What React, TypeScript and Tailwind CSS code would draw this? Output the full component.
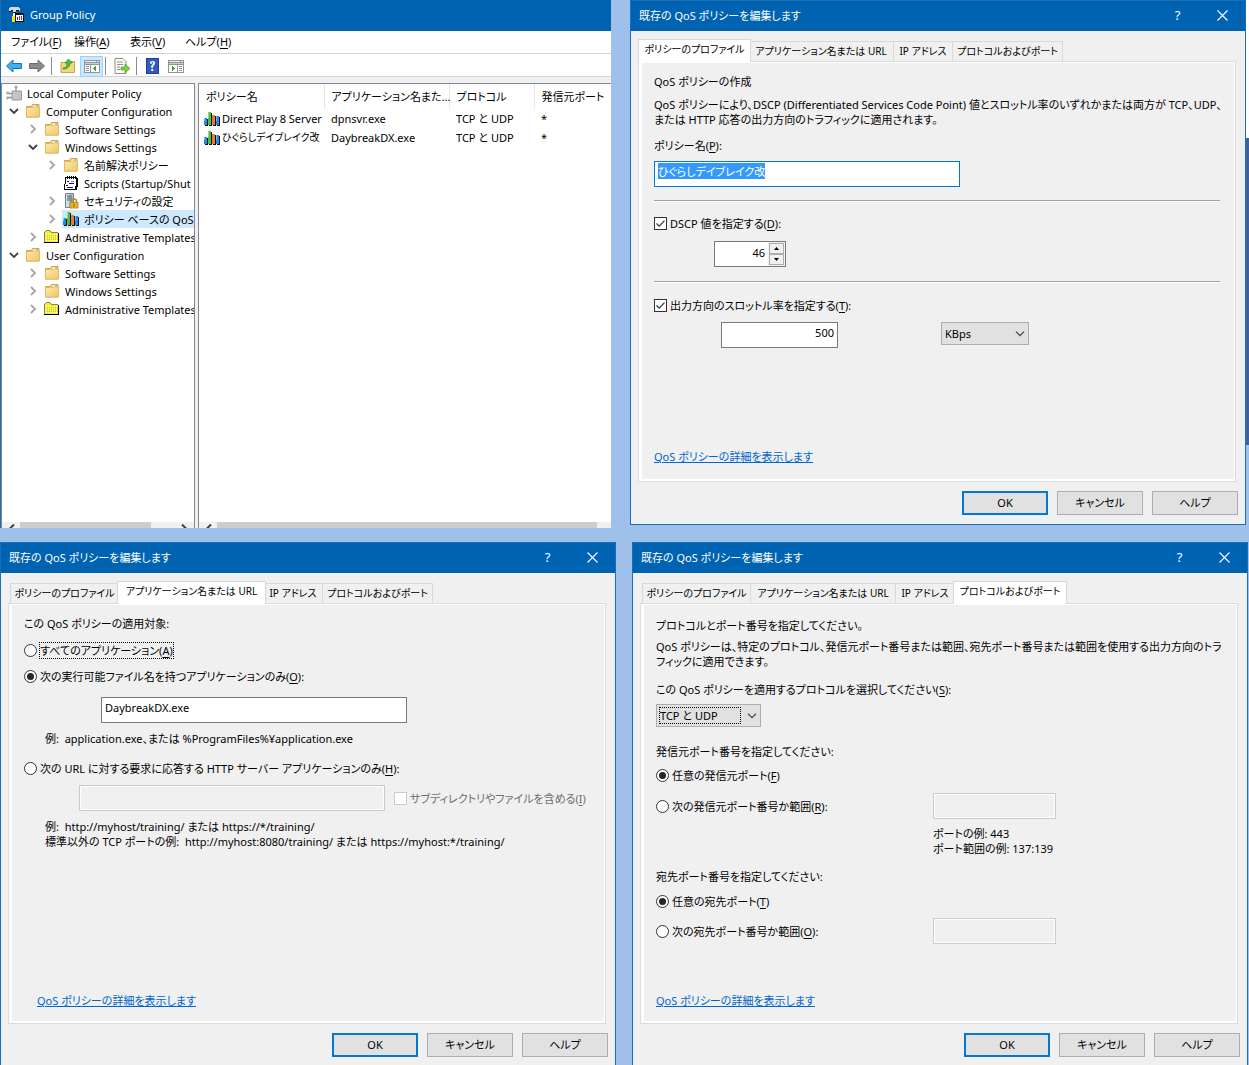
import React, { useEffect, useRef } from 'react';

type IconName = 'folder' | 'template' | 'script' | 'security' | 'qos' | 'root';

interface TreeNode {
  label: string;
  level: 0 | 1 | 2 | 3;
  icon: IconName;
  state?: 'open' | 'closed';
  selected?: boolean;
}

interface PolicyRow {
  name: string;
  nameSize: string;
  app: string;
  protocol: string;
  port: string;
}

const treeNodes: TreeNode[] = [
  { label: 'Local Computer Policy', level: 0, icon: 'root' },
  { label: 'Computer Configuration', level: 1, icon: 'folder', state: 'open' },
  { label: 'Software Settings', level: 2, icon: 'folder', state: 'closed' },
  { label: 'Windows Settings', level: 2, icon: 'folder', state: 'open' },
  { label: '名前解決ポリシー', level: 3, icon: 'folder', state: 'closed' },
  { label: 'Scripts (Startup/Shut', level: 3, icon: 'script' },
  { label: 'セキュリティの設定', level: 3, icon: 'security', state: 'closed' },
  { label: 'ポリシー ベースの QoS', level: 3, icon: 'qos', state: 'closed', selected: true },
  { label: 'Administrative Templates', level: 2, icon: 'template', state: 'closed' },
  { label: 'User Configuration', level: 1, icon: 'folder', state: 'open' },
  { label: 'Software Settings', level: 2, icon: 'folder', state: 'closed' },
  { label: 'Windows Settings', level: 2, icon: 'folder', state: 'closed' },
  { label: 'Administrative Templates', level: 2, icon: 'template', state: 'closed' },
];

const policies: PolicyRow[] = [
  { name: 'Direct Play 8 Server', nameSize: 'text-[11px]', app: 'dpnsvr.exe', protocol: 'TCP と UDP', port: '*' },
  { name: 'ひぐらしデイブレイク改', nameSize: 'text-[10px]', app: 'DaybreakDX.exe', protocol: 'TCP と UDP', port: '*' },
];

const tabs = [
  { label: 'ポリシーのプロファイル', width: 'w-[109px]', activeWidth: 'w-[113px]' },
  { label: 'アプリケーション名または URL', width: 'w-[145px]', activeWidth: 'w-[149px]' },
  { label: 'IP アドレス', width: 'w-[59px]', activeWidth: 'w-[63px]' },
  { label: 'プロトコルおよびポート', width: 'w-[110px]', activeWidth: 'w-[114px]' },
];

const indent = ['pl-[3px]', 'pl-1', 'pl-[23px]', 'pl-[42px]'];

/* Icons */

const FolderIcon = () => (
  <svg width="16" height="16" viewBox="0 0 16 16">
    <defs>
      <linearGradient id="folder-fill" x1="0" y1="0" x2="1" y2="1">
        <stop offset="0" stopColor="#fde9ab" />
        <stop offset="1" stopColor="#efc766" />
      </linearGradient>
    </defs>
    <path d="M1.5 3.5h5l1-2h6.5v12.500h-12.500z" fill="#f2d27c" stroke="#d0a348" />
    <path d="M8.500 2.500h4.500v1.500h-4.500z" fill="#fff" />
    <path d="M11 2.500h2v1h-2z" fill="#4aa0e0" />
    <path d="M1.500 4.500h6.500l1-0.500h5.500v10h-13z" fill="url(#folder-fill)" stroke="#dfb65c" strokeWidth="0.800" />
  </svg>
);

const TemplateIcon = () => (
  <svg width="16" height="16" viewBox="0 0 16 16" shapeRendering="crispEdges">
    <path d="M1 2h1V1h5v1h1v1h6v10H1z" fill="#f6f02a" />
    <path d="M2 5h11M2 7h11M2 9h11M2 11h11" stroke="#fffbc0" strokeDasharray="1 1" />
    <path d="M3 6h11M3 8h11M3 10h11" stroke="#d6cd00" strokeDasharray="1 1" />
    <path d="M0 3h1v10H0zM1 2h1v1H1zM2 1h4v1H2zM6 2h1v1H6zM7 3h7v1H7z" fill="#808080" />
    <path d="M0 13h15v1H0zM14 4h1v10h-1z" fill="#000" />
  </svg>
);

const ScriptIcon = () => (
  <svg width="16" height="16" viewBox="0 0 16 16" shapeRendering="crispEdges">
    <path d="M2 2h12v9h-1v4H1v-5h1z" fill="#fff" />
    <path d="M2 2h1v7H2zM1 9h1v6H1zM1 14h12v1H1zM13 2h1v9h-1zM12 11h1v4h-1zM2 2h12v1H2z" fill="#000" />
    <path d="M14 3h1v9h-1zM13 11h1v4h-1z" fill="#000" />
    <path d="M4 1h1v3H4zM6 1h1v3H6zM8 1h1v3H8zM10 1h1v3h-1zM12 1h1v3h-1z" fill="#000" />
    <path d="M4 6h2v1H4zM6 8h5v1H6zM3 10h2v1H3zM4 12h6v1H4z" fill="#0000d8" />
    <path d="M8 6h3v1H8z" fill="#808080" />
  </svg>
);

const SecurityIcon = () => (
  <svg width="16" height="16" viewBox="0 0 16 16">
    <path d="M2.500 0.500h8v14h-8z" fill="#aebfce" stroke="#6f8292" />
    <path d="M3 1h3v13H3z" fill="#d4dfe8" />
    <path d="M4 3h5M4 5h5M4 7h5" stroke="#4a5c6c" />
    <path d="M8.500 10V8.500a2.500 2.500 0 0 1 5 0V10" fill="none" stroke="#b38a1e" strokeWidth="1.500" />
    <path d="M7 9.500h8V15H7z" fill="#e8b730" stroke="#a87c12" strokeWidth="0.800" />
    <path d="M11 11v2.500" stroke="#6b4c05" />
  </svg>
);

const QosIcon = () => (
  <svg className="shrink-0" width="16" height="16" viewBox="0 0 16 16" shapeRendering="crispEdges">
    <path d="M1 8h3v7H1z" fill="#101010" />
    <path d="M0 7h3v7H0z" fill="#1b8fe0" />
    <path d="M5 2h3v13H5z" fill="#101010" />
    <path d="M4 1h3v13H4z" fill="#4fbf3c" />
    <path d="M9 5h3v10H9z" fill="#101010" />
    <path d="M8 4h3v10H8z" fill="#f0734a" />
    <path d="M13 6h3v9h-3z" fill="#101010" />
    <path d="M12 5h3v9h-3z" fill="#1b8fe0" />
    <path d="M12 5h1v5h-1zM0 7h1v3H0z" fill="#6cc4f5" />
    <path d="M4 1h1v6H4z" fill="#93e07f" />
  </svg>
);

const RootIcon = () => (
  <svg width="16" height="16" viewBox="0 0 16 16">
    <path d="M10 6V2M6 8.500H1.500M6 12.500H1.500" stroke="#8c8c8c" strokeWidth="1.300" />
    <circle cx="10" cy="2" r="1.600" fill="#a9a9a9" />
    <circle cx="1.500" cy="8" r="1.400" fill="#a9a9a9" />
    <circle cx="1.500" cy="13" r="1.400" fill="#a9a9a9" />
    <path d="M6 6h9.500v9H6z" fill="#c4c4c8" stroke="#9b9b9f" />
  </svg>
);

const icons: Record<IconName, React.FC> = {
  folder: FolderIcon,
  template: TemplateIcon,
  script: ScriptIcon,
  security: SecurityIcon,
  qos: QosIcon,
  root: RootIcon,
};

const ConsoleIcon = () => (
  <svg width="16" height="16" viewBox="0 0 16 16" shapeRendering="crispEdges">
    <path d="M1 0h9v1h1v3h-1V3H7v2H4V3H2v1H0V1h1z" fill="#d8d8d8" />
    <path d="M0 4h2v1H0zM2 3h2v1H2zM7 3h3v1H7zM4 5h3v1H4z" fill="#101010" />
    <path d="M4 6h2v3H4z" fill="#f5f5f5" />
    <path d="M6 6h1v3H6z" fill="#101010" />
    <path d="M3 9h3v6H3z" fill="#ffe100" />
    <path d="M6 6h9v9H6z" fill="#101010" />
    <path d="M7 8h7v6H7z" fill="#fff" />
    <path d="M8 10h1v3H8z" fill="#2030c0" />
    <path d="M10 9h1v4h-1z" fill="#c01890" />
    <path d="M12 9h1v4h-1z" fill="#c02020" />
  </svg>
);

const ArrowIcon = ({ back }: { back?: boolean }) => (
  <svg width="18" height="16" viewBox="0 0 18 16">
    {back ? (
      <path d="M1.500 8L8 2v3.500h8.500v5H8V14z" fill="#3fb0ee" stroke="#1d72ae" strokeLinejoin="round" />
    ) : (
      <path d="M16.500 8L10 2v3.500H1.500v5H10V14z" fill="#8b8b8b" stroke="#6c6c6c" strokeLinejoin="round" />
    )}
  </svg>
);

const UpFolderIcon = () => (
  <svg width="16" height="16" viewBox="0 0 16 16">
    <path d="M1 4.500h5l1-1h7.500v11H1z" fill="#f3d682" stroke="#cfa347" />
    <path d="M10.500 3.500h3v1h-3z" fill="#4aa0e0" />
    <path d="M3 10c3 0 4-2 4-5H5l3.500-4L12 5h-2c0 4-3 6-7 6z" fill="#4cc335" stroke="#2b8c1c" strokeWidth="0.700" />
  </svg>
);

const PaneIcon = ({ flip }: { flip?: boolean }) => (
  <svg width="16" height="13" viewBox="0 0 16 13" shapeRendering="crispEdges">
    <path d="M0 0h16v13H0z" fill="#8d959d" />
    <path d="M1 1h11v1H1zM13 1h2v1h-2z" fill="#eef1f4" />
    <path d="M1 3h14v1H1z" fill="#c9ced3" />
    {flip ? (
      <>
        <path d="M1 5h8v7H1zM10 5h5v7h-5z" fill="#fff" />
        <path d="M11 6h3v1h-3zM11 8h3v1h-3zM11 10h3v1h-3z" fill="#8d959d" />
        <path d="M4 6h1v5H4zM5 7h1v3H5zM6 8h1v1H6z" fill="#3da42c" />
      </>
    ) : (
      <>
        <path d="M1 5h5v7H1zM7 5h8v7H7z" fill="#fff" />
        <path d="M2 6h3v1H2zM2 8h3v1H2zM2 10h3v1H2z" fill="#8d959d" />
        <path d="M11 6h1v5h-1zM10 7h1v3h-1zM9 8h1v1H9z" fill="#3da42c" />
      </>
    )}
  </svg>
);

const ExportIcon = () => (
  <svg width="16" height="16" viewBox="0 0 16 16">
    <path d="M1 0.500h8l3 3v12H1z" fill="#fffdf2" stroke="#8f8f8f" />
    <path d="M3 4h6M3 6.500h6M3 9h3M3 11.500h3" stroke="#8f8f8f" />
    <path d="M7 9h4V6l5 4.500-5 4.500v-3H7z" fill="#7ed04a" stroke="#4a9c25" strokeWidth="0.700" />
  </svg>
);

const Chevron = ({ className }: { className?: string }) => (
  <svg className={className} width="10" height="6" viewBox="0 0 10 6">
    <path d="M1 0.700l4 4 4-4" fill="none" stroke="#404040" strokeWidth="1.200" />
  </svg>
);

const ScrollArrow = ({ right }: { right?: boolean }) => (
  <svg className="mt-0.5 shrink-0" width="10" height="8" viewBox="0 0 10 8">
    <path d={right ? 'M3 0.500l3.500 3.500L3 7.500' : 'M7 0.500L3.500 4L7 7.500'} fill="none" stroke="#404040" strokeWidth="2" />
  </svg>
);

const Expander = ({ state }: { state: 'open' | 'closed' }) => (
  <svg width="10" height="10" viewBox="0 0 10 10">
    {state === 'open' ? (
      <path d="M1 3l4 4 4-4" fill="none" stroke="#404040" strokeWidth="1.800" />
    ) : (
      <path d="M3 1l4 4-4 4" fill="none" stroke="#a6a6a6" strokeWidth="1.800" />
    )}
  </svg>
);

/* Shared controls */

const Key = ({ k }: { k: string }) => (
  <>
    (<span className="underline underline-offset-2">{k}</span>)
  </>
);

const inputClass =
  'h-[26px] min-w-0 border border-[#7a7a7a] bg-white px-[3px] pb-1.5 text-[11px] leading-[15px] outline-none';
const disabledClass = 'h-[26px] min-w-0 border border-[#cccccc] bg-[#f0f0f0] shadow-[inset_0_0_0_1px_#fff]';

interface ChoiceProps {
  type: 'radio' | 'checkbox';
  id: string;
  name?: string;
  checked?: boolean;
  disabled?: boolean;
  focused?: boolean;
  children: React.ReactNode;
}

const Choice: React.FC<ChoiceProps> = ({ type, id, name, checked, disabled, focused, children }) => (
  <div className="flex h-[15px] items-center gap-[3px] whitespace-nowrap">
    <span className="relative flex size-[13px] shrink-0 items-center justify-center">
      <input
        id={id}
        type={type}
        name={name}
        defaultChecked={checked}
        disabled={disabled}
        className={`peer size-[13px] appearance-none border bg-white ${type === 'radio' ? 'rounded-full' : ''} ${
          disabled ? 'border-[#cccccc]' : 'border-[#333333]'
        }`}
      />
      {type === 'radio' ? (
        <span className="pointer-events-none absolute hidden size-[7px] rounded-full bg-[#262626] peer-checked:block" />
      ) : (
        <svg
          className="pointer-events-none absolute hidden peer-checked:block"
          width="11"
          height="11"
          viewBox="0 0 11 11"
        >
          <path d="M1.500 5.500l2.700 2.700 5.300-5.600" fill="none" stroke="#333" strokeWidth="1.200" />
        </svg>
      )}
    </span>
    <label
      htmlFor={id}
      className={`${disabled ? 'text-[#6d6d6d]' : ''} ${focused ? 'outline-1 outline-dotted outline-black' : ''}`}
    >
      {children}
    </label>
  </div>
);

const TitleButton = ({ label, children }: { label: string; children: React.ReactNode }) => (
  <button aria-label={label} className="flex h-full w-[45px] items-center justify-center text-[13px]">
    {children}
  </button>
);

const DialogButton = ({ primary, children }: { primary?: boolean; children: React.ReactNode }) => (
  <button
    className={`h-6 w-[86px] bg-[#e1e1e1] pb-0.5 ${primary ? 'border-2 border-[#0078d7]' : 'border border-[#adadad]'}`}
  >
    {children}
  </button>
);

const Divider = () => <hr className="mr-[14px] h-0.5 border-0 border-t border-[#a0a0a0] bg-white" />;

interface DialogProps {
  active: number;
  className: string;
  linkClass?: string;
  children: React.ReactNode;
}

const Dialog: React.FC<DialogProps> = ({ active, className, linkClass = '', children }) => (
  <section className={`min-w-0 border border-[#1a6fb5] bg-[#f0f0f0] ${className}`}>
    <header className="flex h-[30px] items-center bg-[#0063b1] pb-0.5 pl-2 text-white">
      <h2 className="flex-1 truncate">既存の QoS ポリシーを編集します</h2>
      <TitleButton label="ヘルプ">?</TitleButton>
      <TitleButton label="閉じる">
        <svg width="11" height="11" viewBox="0 0 11 11">
          <path d="M0.500 0.500l10 10M10.500 0.500l-10 10" stroke="#fff" strokeWidth="1.100" />
        </svg>
      </TitleButton>
    </header>

    <div className="pt-2 pr-[9px] pl-[7px]">
      <div role="tablist" className="flex h-[22px] items-end pl-0.5 text-[10px] leading-[15px]">
        {tabs.map((tab, i) => (
          <button
            key={tab.label}
            role="tab"
            aria-selected={i === active}
            className={
              i === active
                ? `relative z-10 -mx-0.5 -mb-px flex h-[23px] shrink-0 justify-center border border-b-0 border-[#d9d9d9] bg-white pt-0.5 whitespace-nowrap ${tab.activeWidth}`
                : `flex h-5 shrink-0 justify-center border-t border-r border-[#d9d9d9] pt-0.5 whitespace-nowrap first:border-l ${tab.width}`
            }
          >
            {tab.label}
          </button>
        ))}
      </div>
      <div className="border border-[#dcdcdc]">
        <div className="flex min-h-[419px] flex-col border border-b-2 border-l-[3px] border-white pt-[11px] pb-[13px] pl-3">
          {children}
          <a href="#" className={`mt-auto self-start text-[#0066cc] underline ${linkClass}`}>
            QoS ポリシーの詳細を表示します
          </a>
        </div>
      </div>
    </div>

    <footer className="flex justify-end gap-[9px] pt-[9px] pr-[7px]">
      <DialogButton primary>OK</DialogButton>
      <DialogButton>キャンセル</DialogButton>
      <DialogButton>ヘルプ</DialogButton>
    </footer>
  </section>
);

/* Windows */

const ConsoleWindow = () => (
  <section className="flex h-[528px] min-w-0 flex-col border-l border-[#1a6fb5] bg-[#f0f0f0]">
    <header className="flex h-[31px] shrink-0 items-center gap-[5px] bg-[#0063b1] pb-0.5 pl-2 text-white">
      <ConsoleIcon />
      <h1>Group Policy</h1>
    </header>
    <nav className="grid h-[23px] shrink-0 grid-cols-[63px_56px_55px_auto] items-center justify-start border-b border-[#d4d4d4] bg-white pb-0.5 pl-[10px] text-left">
      <button className="text-left">ファイル<Key k="F" /></button>
      <button className="text-left">操作<Key k="A" /></button>
      <button className="text-left">表示<Key k="V" /></button>
      <button className="text-left">ヘルプ<Key k="H" /></button>
    </nav>
    <div className="flex h-[23px] shrink-0 items-center border-b border-[#d4d4d4] bg-white pt-0.5 pl-1">
      <button aria-label="戻る"><ArrowIcon back /></button>
      <button aria-label="進む" className="ml-[5px]"><ArrowIcon /></button>
      <span className="mx-[5px] h-[18px] w-px bg-[#8d8d8d]" />
      <button aria-label="上へ" className="ml-[3px]"><UpFolderIcon /></button>
      <button
        aria-label="ツリーの表示"
        className="ml-1 flex h-[21px] w-[23px] items-center justify-center border border-[#99d1ff] bg-[#cce8ff]"
      >
        <PaneIcon />
      </button>
      <span className="ml-0.5 h-[18px] w-px bg-[#8d8d8d]" />
      <button aria-label="エクスポート" className="ml-2"><ExportIcon /></button>
      <span className="ml-1.5 h-[18px] w-px bg-[#8d8d8d]" />
      <button
        aria-label="ヘルプ"
        className="ml-[9px] h-4 w-[13px] border border-[#1c3f94] bg-[#3459b8] font-serif text-[13px] leading-[13px] font-bold text-white"
      >
        ?
      </button>
      <button aria-label="操作ウィンドウ" className="ml-[9px]"><PaneIcon flip /></button>
    </div>

    <div className="mt-1.5 flex min-h-0 flex-1 gap-[3px]">
      <div className="flex w-[194px] shrink-0 flex-col border border-b-0 border-[#828790] bg-white">
        <ul className="flex-1 overflow-hidden">
          {treeNodes.map((node, i) => {
            const Icon = icons[node.icon];
            return (
              <li key={i} className={`flex h-[18px] items-center whitespace-nowrap ${indent[node.level]}`}>
                {node.level > 0 && (
                  <span className="mr-0.5 flex w-4 shrink-0 justify-center">
                    {node.state && <Expander state={node.state} />}
                  </span>
                )}
                <span
                  className={`flex h-[18px] items-center gap-[5px] pl-px ${node.selected ? 'bg-[#cde8ff]' : ''}`}
                >
                  <Icon />
                  {node.label}
                </span>
              </li>
            );
          })}
        </ul>
        <div className="flex h-1.5 shrink-0 overflow-hidden bg-[#f0f0f0] px-[5px]">
          <ScrollArrow />
          <span className="mr-auto ml-[3px] h-full w-[131px] bg-[#cdcdcd]" />
          <ScrollArrow right />
        </div>
      </div>

      <div className="flex min-w-0 flex-1 flex-col border-t border-l border-[#828790] bg-white">
        <div className="flex-1 overflow-hidden">
          <table className="w-full table-fixed text-left whitespace-nowrap">
            <thead>
              <tr className="h-[25px]">
                <th className="w-[125px] border-r border-[#e5e5e5] pl-[7px] font-normal">ポリシー名</th>
                <th className="w-[125px] border-r border-[#e5e5e5] pl-[7px] font-normal">アプリケーション名また...</th>
                <th className="w-[85px] border-r border-[#e5e5e5] pl-[7px] font-normal">プロトコル</th>
                <th className="overflow-hidden pl-[7px] font-normal">発信元ポート</th>
              </tr>
            </thead>
            <tbody>
              {policies.map((policy) => (
                <tr key={policy.name} className="h-[19px]">
                  <td className="pl-[5px]">
                    <span className={`flex items-center gap-0.5 ${policy.nameSize}`}>
                      <QosIcon />
                      {policy.name}
                    </span>
                  </td>
                  <td className="pl-[7px]">{policy.app}</td>
                  <td className="pl-[7px]">{policy.protocol}</td>
                  <td className="pl-[7px]">{policy.port}</td>
                </tr>
              ))}
            </tbody>
          </table>
        </div>
        <div className="flex h-1.5 shrink-0 overflow-hidden bg-[#f0f0f0] pr-[14px] pl-[5px]">
          <ScrollArrow />
          <span className="ml-[3px] h-full flex-1 bg-[#cdcdcd]" />
        </div>
      </div>
    </div>
  </section>
);

const ProfileDialog = () => {
  const nameRef = useRef<HTMLInputElement>(null);

  useEffect(() => {
    nameRef.current?.focus();
    nameRef.current?.select();
  }, []);

  return (
    <Dialog active={0} className="pb-[9px]" linkClass="mb-0.5">
      <p>QoS ポリシーの作成</p>
      <p className="mt-2 whitespace-nowrap">
        QoS ポリシーにより、DSCP (Differentiated Services Code Point) 値とスロットル率のいずれかまたは両方が TCP、UDP、
        <br />
        または HTTP 応答の出力方向のトラフィックに適用されます。
      </p>
      <label htmlFor="policy-name" className="mt-[11px]">ポリシー名<Key k="P" />:</label>
      <input
        id="policy-name"
        ref={nameRef}
        defaultValue="ひぐらしデイブレイク改"
        className="mt-2 h-[26px] w-[306px] border border-[#0078d7] bg-white px-[3px] pb-1.5 leading-[15px] outline-none selection:bg-[#3399ff] selection:text-white"
      />
      <div className="mt-[13px]"><Divider /></div>
      <div className="mt-[14px]">
        <Choice type="checkbox" id="dscp" checked>DSCP 値を指定する<Key k="D" />:</Choice>
      </div>
      <div className="mt-[10px] ml-[60px] flex h-[26px] w-[72px] border border-[#7a7a7a] bg-white">
        <input aria-label="DSCP 値" defaultValue="46" className="w-0 flex-1 pr-[3px] pb-1 text-right outline-none" />
        <div className="flex w-[17px] flex-col bg-[#f0f0f0] p-px">
          <button aria-label="増やす" className="flex flex-1 items-center justify-center border border-[#adadad]">
            <svg width="5" height="3" viewBox="0 0 5 3"><path d="M0 3h5L2.500 0z" /></svg>
          </button>
          <button aria-label="減らす" className="flex flex-1 items-center justify-center border border-[#adadad]">
            <svg width="5" height="3" viewBox="0 0 5 3"><path d="M0 0h5L2.500 3z" /></svg>
          </button>
        </div>
      </div>
      <div className="mt-[14px]"><Divider /></div>
      <div className="mt-[15px]">
        <Choice type="checkbox" id="throttle" checked>出力方向のスロットル率を指定する<Key k="T" />:</Choice>
      </div>
      <div className="mt-[9px] flex items-start gap-[103px] pl-[67px]">
        <input aria-label="スロットル率" defaultValue="500" className={`${inputClass} w-[117px] text-right`} />
        <div className="relative">
          <select aria-label="単位" className="h-[23px] w-[88px] appearance-none border border-[#adadad] bg-[#e1e1e1] pl-[3px]">
            <option>KBps</option>
            <option>MBps</option>
          </select>
          <Chevron className="pointer-events-none absolute top-[9px] right-1" />
        </div>
      </div>
    </Dialog>
  );
};

const ApplicationDialog = () => (
  <Dialog active={1} className="border-b-0 pb-2" linkClass="ml-[13px]">
    <p>この QoS ポリシーの適用対象:</p>
    <div className="mt-3">
      <Choice type="radio" name="target" id="all-apps" focused>すべてのアプリケーション<Key k="A" /></Choice>
    </div>
    <div className="mt-[11px]">
      <Choice type="radio" name="target" id="exe-only" checked>
        次の実行可能ファイル名を持つアプリケーションのみ<Key k="O" />:
      </Choice>
    </div>
    <input aria-label="実行可能ファイル名" defaultValue="DaybreakDX.exe" className={`${inputClass} mt-[13px] ml-[77px] w-[306px]`} />
    <p className="mt-2 pl-[21px] whitespace-pre">例:  application.exe、または %ProgramFiles%¥application.exe</p>
    <div className="mt-[15px]">
      <Choice type="radio" name="target" id="url-only">
        次の URL に対する要求に応答する HTTP サーバー アプリケーションのみ<Key k="H" />:
      </Choice>
    </div>
    <div className="mt-[9px] flex items-center gap-[9px] pl-[55px]">
      <input aria-label="URL" disabled className={`${disabledClass} w-[306px]`} />
      <Choice type="checkbox" id="subdirs" disabled>サブディレクトリやファイルを含める<Key k="I" /></Choice>
    </div>
    <p className="mt-2 pl-[21px] whitespace-pre">
      {'例:  http://myhost/training/ または https://*/training/\n標準以外の TCP ポートの例:  http://myhost:8080/training/ または https://myhost:*/training/'}
    </p>
  </Dialog>
);

const PortDialog = () => (
  <Dialog active={3} className="border-b-0 pb-2">
    <p className="mt-0.5">プロトコルとポート番号を指定してください。</p>
    <p className="mt-1.5 whitespace-nowrap">
      QoS ポリシーは、特定のプロトコル、発信元ポート番号または範囲、宛先ポート番号または範囲を使用する出力方向のトラ
      <br />
      フィックに適用できます。
    </p>
    <label htmlFor="protocol" className="mt-[13px]">
      この QoS ポリシーを適用するプロトコルを選択してください<Key k="S" />:
    </label>
    <div className="relative mt-[7px] self-start">
      <select id="protocol" className="h-[23px] w-[105px] appearance-none border border-[#adadad] bg-[#e1e1e1] pl-[3px]">
        <option>TCP と UDP</option>
        <option>TCP</option>
        <option>UDP</option>
      </select>
      <span className="pointer-events-none absolute top-[3px] left-[3px] h-[17px] w-[82px] border border-dotted border-black" />
      <Chevron className="pointer-events-none absolute top-[9px] right-1" />
    </div>
    <p className="mt-[17px]">発信元ポート番号を指定してください:</p>
    <div className="mt-[9px]">
      <Choice type="radio" name="source" id="source-any" checked>任意の発信元ポート<Key k="F" /></Choice>
    </div>
    <div className="mt-[10px] grid grid-cols-[277px_auto] items-center justify-start gap-y-[7px]">
      <Choice type="radio" name="source" id="source-range">次の発信元ポート番号か範囲<Key k="R" />:</Choice>
      <input aria-label="発信元ポート" disabled className={`${disabledClass} w-[123px]`} />
      <p className="col-start-2">
        ポートの例: 443
        <br />
        ポート範囲の例: 137:139
      </p>
    </div>
    <p className="mt-[13px]">宛先ポート番号を指定してください:</p>
    <div className="mt-[10px]">
      <Choice type="radio" name="dest" id="dest-any" checked>任意の宛先ポート<Key k="T" /></Choice>
    </div>
    <div className="mt-[9px] grid grid-cols-[277px_auto] items-center justify-start">
      <Choice type="radio" name="dest" id="dest-range">次の宛先ポート番号か範囲<Key k="O" />:</Choice>
      <input aria-label="宛先ポート" disabled className={`${disabledClass} w-[123px]`} />
    </div>
  </Dialog>
);

const App: React.FC = () => {
  return (
    <div className="min-h-screen overflow-hidden bg-[#a0c0ec] font-['Noto_Sans','Noto_Sans_CJK_JP',sans-serif] text-[11px] leading-[15px] text-black [font-feature-settings:'palt']">
      <div className="grid grid-cols-[minmax(0,630fr)_minmax(0,616fr)_3px] items-start pb-[14px]">
        <div className="pr-[19px]">
          <ConsoleWindow />
        </div>
        <ProfileDialog />
        {/* sliver of the windows behind */}
        <div>
          <div className="h-[138px] bg-white" />
          <div className="h-[307px] bg-[#4060a0]" />
        </div>
      </div>
      <div className="grid grid-cols-2 gap-4 pr-px">
        <ApplicationDialog />
        <PortDialog />
      </div>
    </div>
  );
};

export default App;
